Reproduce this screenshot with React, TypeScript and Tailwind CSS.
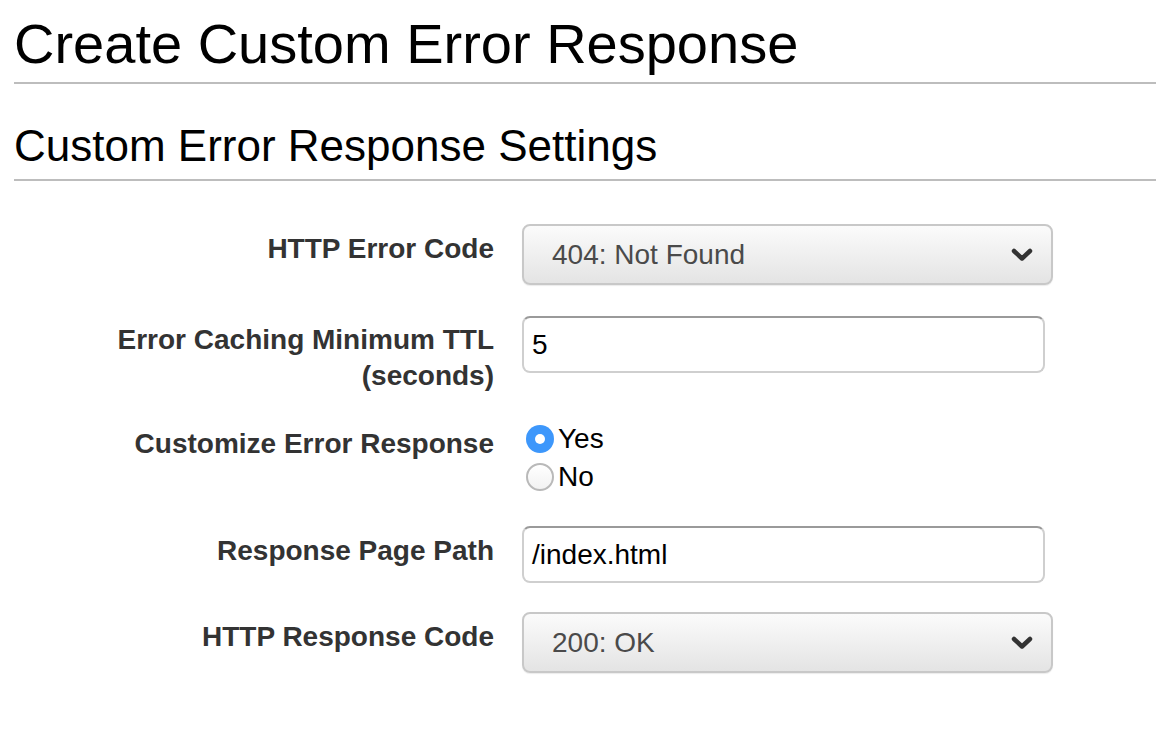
import React from "react";

const font = { fontFamily: '"Liberation Sans", Arial, Helvetica, sans-serif' };

function Chevron() {
  return (
    <svg width="22" height="16" viewBox="0 0 22 16" className="shrink-0">
      <path d="M3 4 L11 11.5 L19 4" fill="none" stroke="#333" strokeWidth="4.5" strokeLinecap="round" strokeLinejoin="round" />
    </svg>
  );
}

function SelectBox({ value }: { value: string }) {
  return (
    <div className="flex h-[61px] w-[531px] items-center justify-between rounded-[8px] border-2 border-[#c8c8c8] bg-gradient-to-b from-[#fbfbfb] to-[#e4e4e4] pl-[28px] pr-[18px] shadow-[0_1px_1px_rgba(0,0,0,0.08)]">
      <span className="text-[28px] leading-none text-[#4a4a4a]">{value}</span>
      <Chevron />
    </div>
  );
}

function TextBox({ value }: { value: string }) {
  return (
    <div className="flex h-[57px] w-[523px] items-center rounded-[8px] border-2 border-[#cfcfcf] border-t-[#9a9a9a] bg-white pl-[8px]">
      <span className="text-[28px] leading-none text-black">{value}</span>
    </div>
  );
}

function Label({ children, pt = "pt-[7px]" }: { children: React.ReactNode; pt?: string }) {
  return (
    <div className={`w-[494px] shrink-0 text-right text-[28px] font-bold leading-[36px] text-[#333] ${pt}`}>
      {children}
    </div>
  );
}

function Radio({ checked, label }: { checked: boolean; label: string }) {
  return (
    <div className="flex h-[38px] items-center">
      <div className="ml-[4px] mr-[4px] flex h-[28px] w-[28px] items-center justify-center">
        {checked ? (
          <div className="flex h-[28px] w-[28px] items-center justify-center rounded-full bg-[#3d97fb]">
            <div className="h-[10px] w-[10px] rounded-full bg-white" />
          </div>
        ) : (
          <div className="h-[28px] w-[28px] rounded-full border-2 border-[#b9b9b9] bg-gradient-to-b from-white to-[#f2f2f2]" />
        )}
      </div>
      <span className="text-[28px] leading-none text-black">{label}</span>
    </div>
  );
}

export default function App() {
  return (
    <div className="min-h-[732px] w-[1156px] bg-white" style={font}>
      <div className="pl-[14px] pt-[16px]">
        <h1 className="text-[56px] font-normal leading-[56px] text-black">Create Custom Error Response</h1>
        <div className="mt-[10px] h-[2px] bg-[#bdbdbd]" />
        <h2 className="mt-[40px] text-[44px] font-normal leading-[44px] text-black">Custom Error Response Settings</h2>
        <div className="mt-[11px] h-[2px] bg-[#bdbdbd]" />
      </div>

      <div className="mt-[43px] flex flex-col">
        <div className="flex gap-[28px]">
          <Label>HTTP Error Code</Label>
          <SelectBox value="404: Not Found" />
        </div>
        <div className="mt-[31px] flex gap-[28px]">
          <Label pt="pt-[6px]">
            Error Caching Minimum TTL
            <br />
            (seconds)
          </Label>
          <TextBox value="5" />
        </div>
        <div className="mt-[26px] flex gap-[28px]">
          <Label pt="pt-[6px]">Customize Error Response</Label>
          <div className="flex flex-col">
            <Radio checked label="Yes" />
            <Radio checked={false} label="No" />
          </div>
        </div>
        <div className="mt-[30px] flex gap-[28px]">
          <Label>Response Page Path</Label>
          <TextBox value="/index.html" />
        </div>
        <div className="mt-[29px] flex gap-[28px]">
          <Label>HTTP Response Code</Label>
          <SelectBox value="200: OK" />
        </div>
      </div>
    </div>
  );
}
